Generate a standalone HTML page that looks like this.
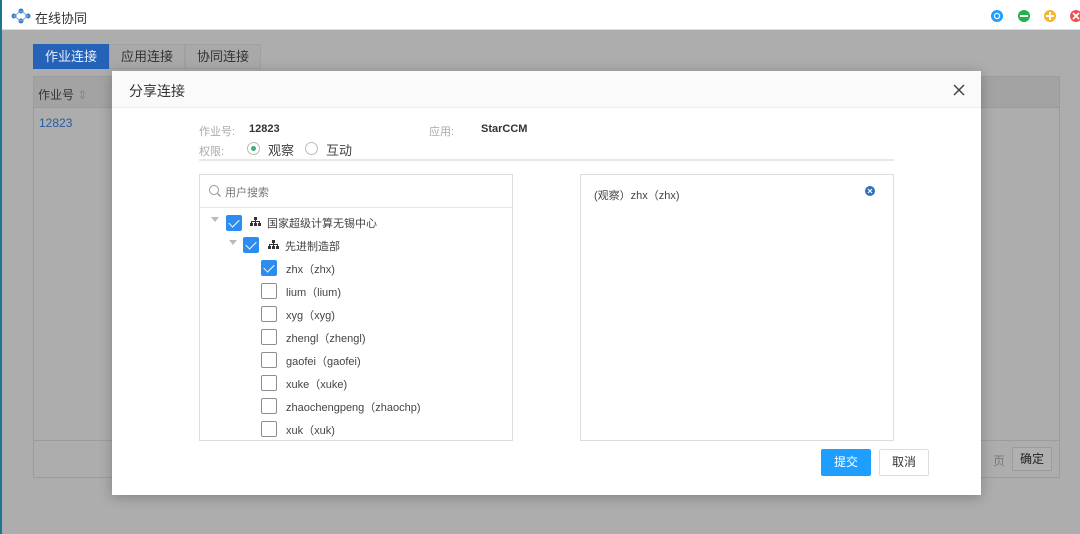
<!DOCTYPE html>
<html><head><meta charset="utf-8"><style>
*{margin:0;padding:0;box-sizing:border-box}
body{width:1080px;height:534px;overflow:hidden;position:relative;background:#adadad;font-family:"Liberation Sans","Noto Sans CJK SC",sans-serif;font-size:12px;color:#333}
.abs{position:absolute}
.cb{position:absolute;width:16px;height:16px;border:1px solid #8a8f96;border-radius:2px;background:#fff}
.cb.on{background:#2d8cf0;border-color:#2d8cf0}
.cb.on:after{content:"";position:absolute;left:4px;top:1px;width:5px;height:9px;border:solid #fff;border-width:0 1.5px 1.5px 0;transform:rotate(45deg)}
.lbl{position:absolute;font-size:11px;color:#444}
</style></head><body>
<div class="abs" style="left:0;top:0;width:2px;height:534px;background:#1f7590"></div>
<div class="abs" style="left:2px;top:0;width:1078px;height:30px;background:#fff;border-bottom:1px solid #ddd"></div>
<svg class="abs" style="left:11px;top:8px" width="20" height="16" viewBox="0 0 20 16"><circle cx="10" cy="3" r="2.5" fill="#3b7cc4"/><circle cx="3" cy="8" r="2.5" fill="#3b7cc4"/><circle cx="17" cy="8" r="2.5" fill="#3b7cc4"/><circle cx="10" cy="13" r="2.5" fill="#3b7cc4"/><path d="M10 3L3 8L10 13L17 8Z" fill="none" stroke="#7aa8dc"/></svg>
<div class="abs" style="left:35px;top:8px;font-size:13px;color:#333">在线协同</div>
<svg class="abs" style="left:990px;top:9px" width="90" height="14"><circle cx="7" cy="7" r="6" fill="#1e9fff"/><circle cx="7" cy="7" r="3.2" fill="#fff"/><circle cx="7" cy="7" r="2" fill="#1e9fff"/><circle cx="34" cy="7" r="6" fill="#22b14c"/><rect x="30" y="6" width="8" height="2" fill="#fff"/><circle cx="60" cy="7" r="6" fill="#f7b52c"/><rect x="56" y="6" width="8" height="2" fill="#fff"/><rect x="59" y="3" width="2" height="8" fill="#fff"/><circle cx="86" cy="7" r="6" fill="#f05050"/><path d="M83 4l6 6M89 4l-6 6" stroke="#fff" stroke-width="1.8"/></svg>
<div class="abs" style="left:33px;top:44px;width:76px;height:25px;background:#2563b8;color:#e8eef8;font-size:13px;text-align:center;line-height:25px">作业连接</div>
<div class="abs" style="left:109px;top:44px;width:76px;height:25px;background:#a9a9a9;border:1px solid #a0a0a0;font-size:13px;text-align:center;line-height:23px;color:#333">应用连接</div>
<div class="abs" style="left:185px;top:44px;width:76px;height:25px;background:#a9a9a9;border:1px solid #a0a0a0;font-size:13px;text-align:center;line-height:23px;color:#333">协同连接</div>
<div class="abs" style="left:33px;top:76px;width:1027px;height:402px;border:1px solid #9c9c9c;background:#adadad"></div>
<div class="abs" style="left:34px;top:77px;width:1025px;height:31px;background:#a3a3a3;border-bottom:1px solid #9a9a9a"></div>
<div class="abs" style="left:38px;top:86px;font-size:12px;color:#333">作业号 <span style="color:#888">⇕</span></div>
<div class="abs" style="left:39px;top:116px;color:#2a5ca0">12823</div>
<div class="abs" style="left:34px;top:440px;width:1025px;height:1px;background:#9c9c9c"></div>
<div class="abs" style="left:993px;top:452px;color:#777">页</div>
<div class="abs" style="left:1012px;top:447px;width:40px;height:24px;border:1px solid #9c9c9c;background:#b0b0b0;text-align:center;line-height:22px;color:#222">确定</div>
<div class="abs" style="left:112px;top:71px;width:869px;height:424px;background:#fff;box-shadow:0 2px 12px rgba(0,0,0,.25)">
 <div class="abs" style="left:0;top:0;width:869px;height:37px;background:#fafafa;border-bottom:1px solid #eee"></div>
 <div class="abs" style="left:17px;top:10px;font-size:14px;color:#333">分享连接</div>
 <svg class="abs" style="left:841px;top:13px" width="12" height="12"><path d="M1 1l10 10M11 1L1 11" stroke="#444" stroke-width="1.5"/></svg>
 <div class="abs" style="left:87px;top:52px;color:#aaa;font-size:11px">作业号:</div>
 <div class="abs" style="left:137px;top:52px;font-weight:bold;font-size:11px;color:#333">12823</div>
 <div class="abs" style="left:317px;top:52px;color:#aaa;font-size:11px">应用:</div>
 <div class="abs" style="left:369px;top:52px;font-weight:bold;font-size:11px;color:#333">StarCCM</div>
 <div class="abs" style="left:87px;top:72px;color:#aaa;font-size:11px">权限:</div>
 <div class="abs" style="left:135px;top:71px;width:13px;height:13px;border:1px solid #bbb;border-radius:50%"></div>
 <div class="abs" style="left:139px;top:75px;width:5px;height:5px;background:#3fae77;border-radius:50%"></div>
 <div class="abs" style="left:156px;top:69px;font-size:13px;color:#444">观察</div>
 <div class="abs" style="left:193px;top:71px;width:13px;height:13px;border:1px solid #bbb;border-radius:50%"></div>
 <div class="abs" style="left:214px;top:69px;font-size:13px;color:#444">互动</div>
 <div class="abs" style="left:87px;top:88px;width:695px;height:2px;background:#e8e8e8"></div>
 <div class="abs" style="left:87px;top:103px;width:314px;height:267px;border:1px solid #ddd"></div>
 <div class="abs" style="left:88px;top:136px;width:312px;height:1px;background:#e5e5e5"></div>
 <svg class="abs" style="left:96px;top:113px" width="14" height="14"><circle cx="6" cy="6" r="4.5" fill="none" stroke="#999"/><path d="M9.5 9.5l3 3" stroke="#999" stroke-width="1.3"/></svg>
 <div class="abs" style="left:113px;top:113px;font-size:11px;color:#777">用户搜索</div>
 <div class="abs" style="left:468px;top:103px;width:314px;height:267px;border:1px solid #ddd"></div>
 <div class="abs" style="left:482px;top:116px;font-size:11px;color:#444">(观察）zhx（zhx)</div>
 <svg class="abs" style="left:753px;top:115px" width="10" height="10"><circle cx="5" cy="5" r="5" fill="#2e6fb8"/><path d="M3 3l4 4M7 3l-4 4" stroke="#fff" stroke-width="1.2"/></svg>
 <div class="abs" style="left:709px;top:378px;width:50px;height:27px;background:#1e9fff;color:#fff;text-align:center;line-height:27px;border-radius:2px">提交</div>
 <div class="abs" style="left:767px;top:378px;width:50px;height:27px;border:1px solid #ddd;text-align:center;line-height:25px;color:#333;border-radius:2px">取消</div>
</div>
<div class="abs" style="left:211px;top:217px;border:4px solid transparent;border-top:5px solid #bbb"></div>
<div class="cb on" style="left:226px;top:215px"></div>
<svg class="abs" style="left:250px;top:217px" width="11" height="10"><rect x="4" y="0" width="3" height="3" fill="#333"/><rect x="0" y="6" width="3" height="3" fill="#333"/><rect x="4" y="6" width="3" height="3" fill="#333"/><rect x="8" y="6" width="3" height="3" fill="#333"/><path d="M5.5 3v3M1.5 6V4.5h8V6" stroke="#333" fill="none"/></svg>
<div class="lbl" style="left:267px;top:215px">国家超级计算无锡中心</div>
<div class="abs" style="left:229px;top:240px;border:4px solid transparent;border-top:5px solid #bbb"></div>
<div class="cb on" style="left:243px;top:237px"></div>
<svg class="abs" style="left:268px;top:240px" width="11" height="10"><rect x="4" y="0" width="3" height="3" fill="#333"/><rect x="0" y="6" width="3" height="3" fill="#333"/><rect x="4" y="6" width="3" height="3" fill="#333"/><rect x="8" y="6" width="3" height="3" fill="#333"/><path d="M5.5 3v3M1.5 6V4.5h8V6" stroke="#333" fill="none"/></svg>
<div class="lbl" style="left:285px;top:238px">先进制造部</div>
<div class="cb on" style="left:261px;top:260px"></div><div class="lbl" style="left:286px;top:261px">zhx（zhx)</div>
<div class="cb" style="left:261px;top:283px"></div><div class="lbl" style="left:286px;top:284px">lium（lium)</div>
<div class="cb" style="left:261px;top:306px"></div><div class="lbl" style="left:286px;top:307px">xyg（xyg)</div>
<div class="cb" style="left:261px;top:329px"></div><div class="lbl" style="left:286px;top:330px">zhengl（zhengl)</div>
<div class="cb" style="left:261px;top:352px"></div><div class="lbl" style="left:286px;top:353px">gaofei（gaofei)</div>
<div class="cb" style="left:261px;top:375px"></div><div class="lbl" style="left:286px;top:376px">xuke（xuke)</div>
<div class="cb" style="left:261px;top:398px"></div><div class="lbl" style="left:286px;top:399px">zhaochengpeng（zhaochp)</div>
<div class="cb" style="left:261px;top:421px"></div><div class="lbl" style="left:286px;top:422px">xuk（xuk)</div>
</body></html>
